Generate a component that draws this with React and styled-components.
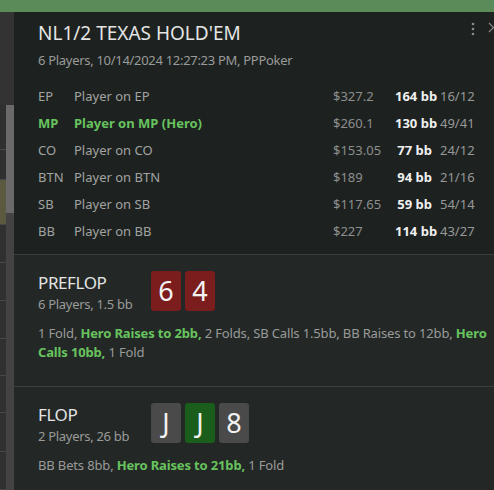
import React from "react";
import styled, { createGlobalStyle } from "styled-components";

const GlobalStyle = createGlobalStyle`
  html, body {
    margin: 0;
    padding: 0;
    background: #1d2220;
    overflow: hidden;
  }
  body {
    font-family: "Noto Sans", "Open Sans", sans-serif;
  }
`;

const Screen = styled.div`
  width: 494px;
  height: 490px;
  display: flex;
  flex-direction: column;
  overflow: hidden;
`;

const TopBar = styled.div`
  height: 12px;
  flex: none;
  background: #5b8b59;
`;

const Body = styled.div`
  flex: 1;
  display: flex;
  min-height: 0;
`;

/* background app list peeking out on the left */
const Sidebar = styled.div`
  width: 14px;
  flex: none;
  display: flex;
  background: #333333;
`;

const SideList = styled.div`
  width: 6px;
  padding-top: 93px;
  display: flex;
  flex-direction: column;
`;

const SideRow = styled.div`
  height: ${(p) => p.h}px;
  background: ${(p) => (p.active ? "#5b5a40" : "#303030")};
  border-bottom: 1px solid #484848;
  box-sizing: border-box;
`;

const ScrollTrack = styled.div`
  width: 8px;
  margin-top: 93px;
  background: #434343;
`;

const ScrollThumb = styled.div`
  height: 108px;
  background: #6a6a6a;
`;

const Panel = styled.div`
  flex: 1;
  display: flex;
  flex-direction: column;
  overflow: hidden;
  background: #232826;
`;

const HandHeader = styled.section`
  background: #1d2220;
  padding: 9px 16px 10px 24px;
  border-bottom: 1px solid #3a3f3d;
`;

const TitleRow = styled.div`
  display: flex;
  align-items: flex-start;
`;

const Title = styled.h1`
  flex: 1;
  margin: 0;
  font-size: 19px;
  line-height: 24px;
  font-weight: 400;
  color: #e4e4e4;
`;

const Controls = styled.div`
  display: flex;
  gap: 13px;
  margin-right: -21px;
  padding-top: 1px;
`;

const Sub = styled.div`
  font-size: 13px;
  line-height: 18px;
  color: #9a9a9a;
  letter-spacing: -0.3px;
  margin-top: ${(p) => p.mt || 0}px;
`;

const Seats = styled.div`
  margin-top: 13px;
  display: grid;
  grid-template-columns: 36px 1fr 62px 37px 46px;
  grid-auto-rows: 27px;
  align-items: center;
  font-size: 13px;
`;

const Cell = styled.div`
  white-space: nowrap;
  color: ${(p) => (p.hero ? "#68c35f" : p.c || "#a2a2a2")};
  font-weight: ${(p) => (p.bold || p.hero ? 700 : 400)};
  text-align: ${(p) => (p.right ? "right" : "left")};
  padding-left: ${(p) => p.pl || 0}px;
`;

const Street = styled.section`
  padding: 16px 2px 24px 24px;
  border-bottom: 1px solid #3a3f3d;
  background: #232826;
`;

const StreetHead = styled.div`
  display: flex;
  align-items: flex-start;
`;

const StreetInfo = styled.div`
  width: 113px;
  flex: none;
`;

const StreetName = styled.div`
  font-size: 17px;
  line-height: 24px;
  letter-spacing: -0.4px;
  color: #e4e4e4;
`;

const Cards = styled.div`
  display: flex;
  gap: 4px;
`;

const Card = styled.div`
  width: 30px;
  height: 40px;
  border-radius: 3px;
  background: ${(p) => p.bg};
  color: #f2f2f2;
  font-size: 27px;
  line-height: 40px;
  text-align: center;
`;

const Actions = styled.p`
  margin: 11px 0 0;
  font-size: 13px;
  line-height: 19px;
  color: #9a9a9a;
  letter-spacing: -0.15px;
`;

const Hero = styled.span`
  color: #68c35f;
  font-weight: 700;
`;

const suitBg = { h: "#7b1d1d", s: "#4a4a4a", c: "#1b5e1b" };

const seats = [
  ["EP", "Player on EP", "$327.2", "164 bb", "16/12"],
  ["MP", "Player on MP (Hero)", "$260.1", "130 bb", "49/41", true],
  ["CO", "Player on CO", "$153.05", "77 bb", "24/12"],
  ["BTN", "Player on BTN", "$189", "94 bb", "21/16"],
  ["SB", "Player on SB", "$117.65", "59 bb", "54/14"],
  ["BB", "Player on BB", "$227", "114 bb", "43/27"],
];

const sideRows = [
  { h: 46 },
  { h: 31 },
  { h: 47, active: true },
  { h: 39 },
  { h: 39 },
  { h: 39 },
  { h: 38 },
  { h: 39 },
  { h: 40 },
  { h: 39 },
];

function Kebab() {
  return (
    <svg width="4" height="14" viewBox="0 0 4 14">
      <circle cx="2" cy="2" r="1.3" fill="#8a8a8a" />
      <circle cx="2" cy="7" r="1.3" fill="#8a8a8a" />
      <circle cx="2" cy="12" r="1.3" fill="#8a8a8a" />
    </svg>
  );
}

function CloseIcon() {
  return (
    <svg width="11" height="11" viewBox="0 0 11 11">
      <path d="M1 1 L10 10 M10 1 L1 10" stroke="#8a8a8a" strokeWidth="1.2" />
    </svg>
  );
}

function StreetBlock({ name, info, cards, children }) {
  return (
    <Street>
      <StreetHead>
        <StreetInfo>
          <StreetName>{name}</StreetName>
          <Sub>{info}</Sub>
        </StreetInfo>
        <Cards>
          {cards.map(([rank, suit], i) => (
            <Card key={i} bg={suitBg[suit]}>
              {rank}
            </Card>
          ))}
        </Cards>
      </StreetHead>
      <Actions>{children}</Actions>
    </Street>
  );
}

export default function App() {
  return (
    <>
      <GlobalStyle />
      <Screen>
        <TopBar />
        <Body>
          <Sidebar>
            <SideList>
              {sideRows.map((r, i) => (
                <SideRow key={i} h={r.h} active={r.active} />
              ))}
            </SideList>
            <ScrollTrack>
              <ScrollThumb />
            </ScrollTrack>
          </Sidebar>
          <Panel>
            <HandHeader>
              <TitleRow>
                <Title>NL1/2 TEXAS HOLD'EM</Title>
                <Controls>
                  <Kebab />
                  <CloseIcon />
                </Controls>
              </TitleRow>
              <Sub mt={6}>6 Players, 10/14/2024 12:27:23 PM, PPPoker</Sub>
              <Seats>
                {seats.map(([pos, name, stack, bb, stat, hero]) => (
                  <React.Fragment key={pos}>
                    <Cell hero={hero}>{pos}</Cell>
                    <Cell hero={hero}>{name}</Cell>
                    <Cell c="#8e8e8e">{stack}</Cell>
                    <Cell bold right c="#f0f0f0">
                      {bb}
                    </Cell>
                    <Cell pl={8} c="#989898">
                      {stat}
                    </Cell>
                  </React.Fragment>
                ))}
              </Seats>
            </HandHeader>
            <StreetBlock
              name="PREFLOP"
              info="6 Players, 1.5 bb"
              cards={[
                ["6", "h"],
                ["4", "h"],
              ]}
            >
              1 Fold, <Hero>Hero Raises to 2bb,</Hero> 2 Folds, SB Calls 1.5bb,
              BB Raises to 12bb, <Hero>Hero Calls 10bb,</Hero> 1 Fold
            </StreetBlock>
            <StreetBlock
              name="FLOP"
              info="2 Players, 26 bb"
              cards={[
                ["J", "s"],
                ["J", "c"],
                ["8", "s"],
              ]}
            >
              BB Bets 8bb, <Hero>Hero Raises to 21bb,</Hero> 1 Fold
            </StreetBlock>
          </Panel>
        </Body>
      </Screen>
    </>
  );
}
